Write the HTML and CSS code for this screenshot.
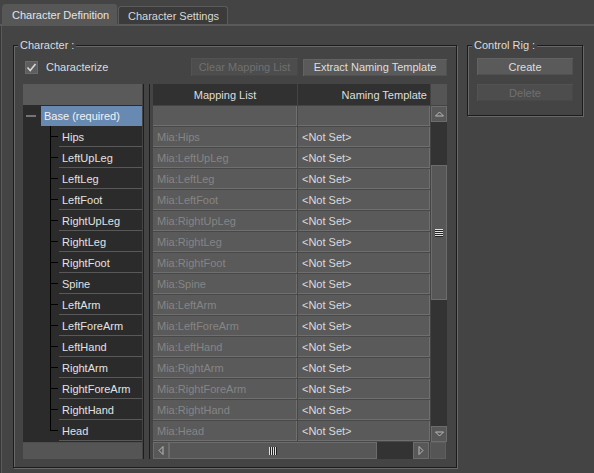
FILE: index.html
```html
<!DOCTYPE html>
<html>
<head>
<meta charset="utf-8">
<link rel="stylesheet" href="styles.css">
</head>
<body>
<div class="tabbar">
  <div class="tab active">Character Definition</div>
  <div class="tab">Character Settings</div>
</div>
<div class="page">
  <div class="group char">
    <span class="group-title">Character :</span>
    <div class="toolbar">
      <label class="check">
        <span class="box"><svg width="11" height="11" viewBox="0 0 11 11"><polyline points="1.5,5.5 4.2,8.5 9.5,2" fill="none" stroke="#d8d8d8" stroke-width="1.6"/></svg></span>
        Characterize
      </label>
      <button class="btn disabled clear">Clear Mapping List</button>
      <button class="btn extract">Extract Naming Template</button>
    </div>
    <div class="panes">
      <div class="tree">
        <div class="tree-head"></div>
        <div class="tree-body">
          <div class="tree-root"><span class="minus"></span><span class="root-label">Base (required)</span></div>
          <ul class="tree-children">
            <li><span>Hips</span></li>
            <li><span>LeftUpLeg</span></li>
            <li><span>LeftLeg</span></li>
            <li><span>LeftFoot</span></li>
            <li><span>RightUpLeg</span></li>
            <li><span>RightLeg</span></li>
            <li><span>RightFoot</span></li>
            <li><span>Spine</span></li>
            <li><span>LeftArm</span></li>
            <li><span>LeftForeArm</span></li>
            <li><span>LeftHand</span></li>
            <li><span>RightArm</span></li>
            <li><span>RightForeArm</span></li>
            <li><span>RightHand</span></li>
            <li class="last"><span>Head</span></li>
          </ul>
        </div>
        <div class="tree-foot"></div>
      </div>
      <div class="splitter"></div>
      <div class="table">
        <div class="thead">
          <div class="th map">Mapping List</div>
          <div class="th name">Naming Template</div>
          <div class="th corner"></div>
        </div>
        <div class="tmain">
          <div class="rows">
            <div class="row"><div class="cell map"></div><div class="cell name"></div></div>
            <div class="row"><div class="cell map">Mia:Hips</div><div class="cell name">&lt;Not Set&gt;</div></div>
            <div class="row"><div class="cell map">Mia:LeftUpLeg</div><div class="cell name">&lt;Not Set&gt;</div></div>
            <div class="row"><div class="cell map">Mia:LeftLeg</div><div class="cell name">&lt;Not Set&gt;</div></div>
            <div class="row"><div class="cell map">Mia:LeftFoot</div><div class="cell name">&lt;Not Set&gt;</div></div>
            <div class="row"><div class="cell map">Mia:RightUpLeg</div><div class="cell name">&lt;Not Set&gt;</div></div>
            <div class="row"><div class="cell map">Mia:RightLeg</div><div class="cell name">&lt;Not Set&gt;</div></div>
            <div class="row"><div class="cell map">Mia:RightFoot</div><div class="cell name">&lt;Not Set&gt;</div></div>
            <div class="row"><div class="cell map">Mia:Spine</div><div class="cell name">&lt;Not Set&gt;</div></div>
            <div class="row"><div class="cell map">Mia:LeftArm</div><div class="cell name">&lt;Not Set&gt;</div></div>
            <div class="row"><div class="cell map">Mia:LeftForeArm</div><div class="cell name">&lt;Not Set&gt;</div></div>
            <div class="row"><div class="cell map">Mia:LeftHand</div><div class="cell name">&lt;Not Set&gt;</div></div>
            <div class="row"><div class="cell map">Mia:RightArm</div><div class="cell name">&lt;Not Set&gt;</div></div>
            <div class="row"><div class="cell map">Mia:RightForeArm</div><div class="cell name">&lt;Not Set&gt;</div></div>
            <div class="row"><div class="cell map">Mia:RightHand</div><div class="cell name">&lt;Not Set&gt;</div></div>
            <div class="row"><div class="cell map">Mia:Head</div><div class="cell name">&lt;Not Set&gt;</div></div>
          </div>
          <div class="vscroll">
            <div class="sbtn"><svg width="9" height="6" viewBox="0 0 9 6"><polygon points="0.5,5 4.5,1 8.5,5" fill="none" stroke="#b8b8b8" stroke-width="1"/></svg></div>
            <div class="vtrack">
              <div class="vthumb"><svg width="8" height="8" viewBox="0 0 8 8"><g stroke="#e0e0e0" stroke-width="1"><line x1="0" y1="0.5" x2="8" y2="0.5"/><line x1="0" y1="2.5" x2="8" y2="2.5"/><line x1="0" y1="4.5" x2="8" y2="4.5"/><line x1="0" y1="6.5" x2="8" y2="6.5"/></g><g stroke="#222" stroke-width="1"><line x1="0" y1="1.5" x2="8" y2="1.5"/><line x1="0" y1="3.5" x2="8" y2="3.5"/><line x1="0" y1="5.5" x2="8" y2="5.5"/><line x1="0" y1="7.5" x2="8" y2="7.5"/></g></svg></div>
            </div>
            <div class="sbtn"><svg width="9" height="6" viewBox="0 0 9 6"><polygon points="0.5,1 4.5,5 8.5,1" fill="none" stroke="#b8b8b8" stroke-width="1"/></svg></div>
          </div>
        </div>
        <div class="hscroll">
          <div class="sbtn h"><svg width="6" height="9" viewBox="0 0 6 9"><polygon points="5,0.5 1,4.5 5,8.5" fill="none" stroke="#b8b8b8" stroke-width="1"/></svg></div>
          <div class="hthumb"><svg width="8" height="8" viewBox="0 0 8 8"><g stroke="#e0e0e0" stroke-width="1"><line x1="0.5" y1="0" x2="0.5" y2="8"/><line x1="2.5" y1="0" x2="2.5" y2="8"/><line x1="4.5" y1="0" x2="4.5" y2="8"/><line x1="6.5" y1="0" x2="6.5" y2="8"/></g><g stroke="#222" stroke-width="1"><line x1="1.5" y1="0" x2="1.5" y2="8"/><line x1="3.5" y1="0" x2="3.5" y2="8"/><line x1="5.5" y1="0" x2="5.5" y2="8"/><line x1="7.5" y1="0" x2="7.5" y2="8"/></g></svg></div>
          <div class="htrack"></div>
          <div class="sbtn h"><svg width="6" height="9" viewBox="0 0 6 9"><polygon points="1,0.5 5,4.5 1,8.5" fill="none" stroke="#b8b8b8" stroke-width="1"/></svg></div>
          <div class="hcorner"></div>
        </div>
      </div>
    </div>
  </div>
  <div class="group rig">
    <span class="group-title">Control Rig :</span>
    <button class="btn create">Create</button>
    <button class="btn disabled delete">Delete</button>
  </div>
</div>
</body>
</html>
```
FILE: styles.css
```css
* { box-sizing: border-box; }
html, body { margin: 0; padding: 0; }
body {
  width: 594px;
  height: 473px;
  overflow: hidden;
  background: #444444;
  font-family: "Liberation Sans", Arial, sans-serif;
  font-size: 11px;
  color: #dcdcdc;
}

/* Tabs */
.tabbar {
  height: 26px;
  display: flex;
  align-items: flex-end;
  padding-left: 2px;
  border-bottom: 2px solid #5a5a5a;
}
.tab {
  height: 18px;
  width: 110px;
  margin-left: 1px;
  padding: 1px 0 0 9px;
  line-height: 17px;
  background: #3b3b3b;
  border: 1px solid #5b5b5b;
  border-bottom: none;
  border-radius: 3px 3px 0 0;
  color: #d8d8d8;
}
.tab.active {
  height: 22px;
  width: 115px;
  margin-left: 0;
  margin-bottom: -2px;
  padding: 1px 0 0 10px;
  line-height: 21px;
  background: #575757;
  border: none;
  border-radius: 4px 3px 0 0;
  color: #e4e4e4;
}

/* Page */
.page {
  height: 447px;
  display: flex;
  align-items: flex-start;
  gap: 10px;
  padding: 19px 0 0 13px;
  box-shadow: inset 1px 0 #383838, inset 2px 0 #5a5a5a;
}

.group {
  display: flex;
  flex-direction: column;
  border: 1px solid #1c1c1c;
  box-shadow: 1px 1px 0 #686868, inset 1px 1px 0 #686868;
  padding: 0 9px;
}
.group-title {
  align-self: flex-start;
  margin: -8px 0 0 -5px;
  padding: 0 2px;
  line-height: 14px;
  background: #444444;
  color: #dcdcdc;
}
.char { width: 444px; height: 423px; }
.rig { width: 116px; height: 71px; }

/* Buttons */
.btn {
  font: inherit;
  height: 18px;
  padding: 0;
  border: none;
  background: #5a5a5a;
  color: #dedede;
  box-shadow: inset 1px 1px 0 #626262, inset -1px -1px 0 #505050;
  text-align: center;
}
.btn.disabled {
  background: #4d4d4d;
  color: #707070;
  box-shadow: inset 1px 1px 0 #525252, inset -1px -1px 0 #484848;
}
.create { margin-top: 6px; height: 17px; }
.delete { margin-top: 9px; height: 17px; }

.toolbar {
  margin-top: 6px;
  height: 18px;
  display: flex;
  align-items: center;
}
.check {
  display: flex;
  align-items: center;
  gap: 8px;
  margin-left: 2px;
  color: #dcdcdc;
}
.box {
  width: 13px;
  height: 13px;
  display: flex;
  align-items: center;
  justify-content: center;
  background: #5e5e5e;
  border: 1px solid #6a6a6a;
}
.clear { margin-left: auto; width: 107px; }
.extract { margin-left: 5px; width: 144px; height: 17px; }

/* Panes */
.panes {
  margin-top: 8px;
  height: 375px;
  display: flex;
}
.tree {
  width: 119px;
  display: flex;
  flex-direction: column;
}
.tree-head {
  height: 21px;
  background: #5a5a5a;
}
.tree-body {
  height: 337px;
  padding-top: 1px;
  background: #2b2b2b;
}
.tree-foot {
  height: 17px;
  background: #555555;
  box-shadow: inset 0 1px #4e4e4e;
}
.tree-root {
  height: 20px;
  display: flex;
  align-items: center;
}
.minus {
  width: 10px;
  height: 2px;
  margin-left: 3px;
  background: #747474;
}
.root-label {
  margin-left: 5px;
  flex: 1;
  height: 20px;
  line-height: 20px;
  padding-left: 3px;
  background: #6789b2;
  color: #f2f2f2;
}
.tree-children {
  list-style: none;
  margin: 0;
  padding: 0;
}
.tree-children li {
  height: 21px;
  display: flex;
  background:
    linear-gradient(#000, #000) 27px 10px / 8px 1px no-repeat,
    linear-gradient(#000, #000) 27px 0 / 1px 100% no-repeat;
}
.tree-children li.last {
  background:
    linear-gradient(#000, #000) 27px 10px / 8px 1px no-repeat,
    linear-gradient(#000, #000) 27px 0 / 1px 11px no-repeat;
}
.tree-children li span {
  margin-left: 36px;
  flex: 1;
  padding: 2px 0 0 3px;
  line-height: 18px;
  border-bottom: 1px solid #585858;
  color: #e2e2e2;
}

.splitter {
  width: 1px;
  margin: 0 5px 0 1px;
  background: #1e1e1e;
}

/* Table */
.table {
  width: 298px;
  display: flex;
  flex-direction: column;
  border-left: 1px solid #1e1e1e;
  padding-left: 3px;
}
.thead {
  height: 21px;
  margin-bottom: 1px;
  display: flex;
  gap: 1px;
}
.th {
  background: #313131;
  line-height: 22px;
  color: #dedede;
}
.th.map { width: 144px; text-align: center; }
.th.name { width: 132px; text-align: right; padding-right: 3px; }
.th.corner { width: 16px; background: #555555; }

.tmain {
  height: 336px;
  display: flex;
  gap: 1px;
}
.rows {
  width: 277px;
  background: #484848;
}
.row {
  height: 21px;
  display: flex;
  gap: 1px;
}
.cell {
  height: 20px;
  line-height: 20px;
  padding-left: 4px;
  background: #5a5a5a;
  border-right: 1px solid #6f6f6f;
  border-bottom: 1px solid #6f6f6f;
  white-space: nowrap;
  overflow: hidden;
}
.cell.map { width: 144px; color: #858585; }
.cell.name { width: 132px; color: #dadada; }

.vscroll {
  width: 16px;
  display: flex;
  flex-direction: column;
}
.sbtn {
  width: 16px;
  height: 16px;
  display: flex;
  align-items: center;
  justify-content: center;
  background: #585858;
  border: 1px solid #6c6c6c;
}
.sbtn.h { height: 17px; }
.vtrack {
  flex: 1;
  background: #333333;
  padding-top: 43px;
}
.vthumb {
  height: 135px;
  display: flex;
  align-items: center;
  justify-content: center;
  background: #575757;
  border: 1px solid #6c6c6c;
}

.hscroll {
  height: 17px;
  display: flex;
}
.hthumb {
  width: 208px;
  display: flex;
  align-items: center;
  justify-content: flex-end;
  padding-right: 99px;
  background: #575757;
  border: 1px solid #6c6c6c;
}
.htrack {
  width: 36px;
  background: #333333;
}
.hscroll .sbtn:nth-of-type(1) { width: 16px; }
.hscroll .sbtn:last-of-type { width: 17px; }
.hcorner {
  width: 16px;
  margin-left: 1px;
  background: #555555;
  border: 1px solid #5e5e5e;
}
```
